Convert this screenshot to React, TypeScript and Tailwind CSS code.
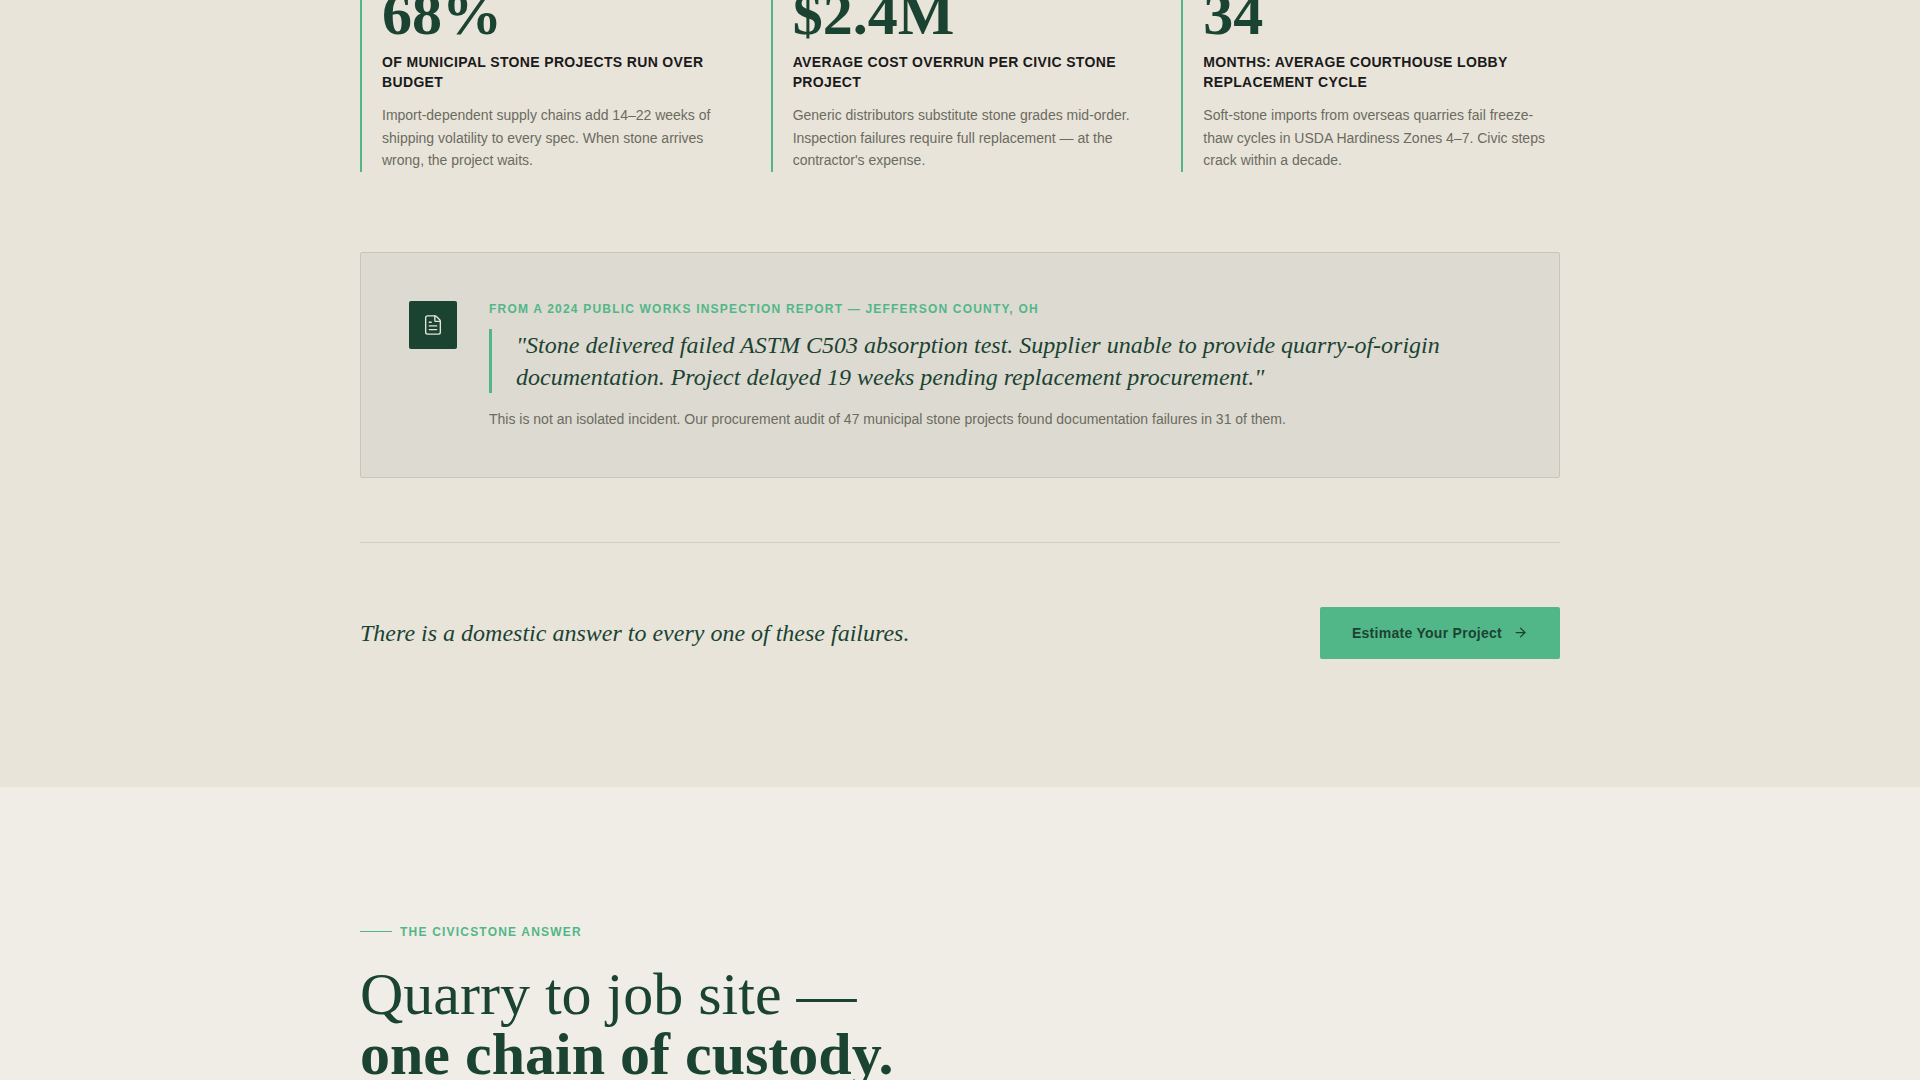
import { ArrowRight, FileText } from "lucide-react";

const stats = [
  {
    value: "68%",
    label: "Of municipal stone projects run over budget",
    body: "Import-dependent supply chains add 14–22 weeks of shipping volatility to every spec. When stone arrives wrong, the project waits.",
  },
  {
    value: "$2.4M",
    label: "Average cost overrun per civic stone project",
    body: "Generic distributors substitute stone grades mid-order. Inspection failures require full replacement — at the contractor's expense.",
  },
  {
    value: "34",
    label: "Months: average courthouse lobby replacement cycle",
    body: "Soft-stone imports from overseas quarries fail freeze-thaw cycles in USDA Hardiness Zones 4–7. Civic steps crack within a decade.",
  },
];

const serif = "font-['Liberation_Serif',serif]";

export default function App() {
  return (
    <div className="h-[1080px] overflow-hidden bg-[#f0ede6] font-['Liberation_Sans',sans-serif]">
      {/* page is shot scrolled down, so the stat numbers run off the top */}
      <section className="flow-root bg-[#e8e4da] pb-32">
        <div className="mx-auto w-[1200px]">
          <div className="grid grid-cols-3 gap-8 -mt-4">
            {stats.map((s) => (
              <div key={s.value} className="border-l-2 border-[#52b788] pl-5">
                <div className={`${serif} text-[60px] leading-none font-bold text-[#1b4332] mb-2`}>{s.value}</div>
                <div className="text-sm leading-5 font-bold uppercase tracking-[0.025em] text-[#1a1a1a] mb-[12.35px]">
                  {s.label}
                </div>
                <p className="text-sm leading-[1.6] text-[#6b6b60]">{s.body}</p>
              </div>
            ))}
          </div>

          <div className="mt-20 flex gap-8 rounded-[2px] border border-[#c8c5b9] bg-[#dddad1] p-12">
            <div className="flex h-12 w-12 shrink-0 items-center justify-center rounded-[2px] bg-[#1b4332]">
              <FileText size={22} strokeWidth={1.5} className="text-[#e8e4da]" />
            </div>
            <div>
              <div className="mb-3 text-xs leading-4 font-bold uppercase tracking-[0.1em] text-[#52b788]">
                From a 2024 Public Works Inspection Report — Jefferson County, OH
              </div>
              <blockquote className={`${serif} mb-4 border-l-[3px] border-[#52b788] pl-6 text-2xl leading-8 italic text-[#1b4332]`}>
                "Stone delivered failed ASTM C503 absorption test. Supplier unable to provide quarry-of-origin documentation. Project delayed 19 weeks pending replacement procurement."
              </blockquote>
              <p className="text-sm leading-5 text-[#6b6b60]">
                This is not an isolated incident. Our procurement audit of 47 municipal stone projects found documentation failures in 31 of them.
              </p>
            </div>
          </div>

          <div className="mt-16 flex items-center justify-between border-t border-[#d4d0c5] pt-16">
            <p className={`${serif} text-2xl italic text-[#1b4332]`}>There is a domestic answer to every one of these failures.</p>
            <a className="flex h-[52px] items-center gap-[11px] rounded-[2px] bg-[#52b788] px-8 text-sm font-bold tracking-[0.02em] text-[#1b4332]">
              Estimate Your Project
              <ArrowRight size={15} />
            </a>
          </div>
        </div>
      </section>

      <section className="mx-auto w-[1200px] pt-[137px]">
        <div className="mb-6 flex items-center gap-2">
          <span className="h-px w-8 bg-[#52b788]" />
          <span className="text-xs font-bold uppercase tracking-[0.1em] text-[#52b788]">The CivicStone Answer</span>
        </div>
        <h2 className={`${serif} text-[60px] leading-none font-normal text-[#1b4332]`}>
          Quarry to job site —
          <br />
          <strong className="font-bold">one chain of custody.</strong>
        </h2>
      </section>
    </div>
  );
}
